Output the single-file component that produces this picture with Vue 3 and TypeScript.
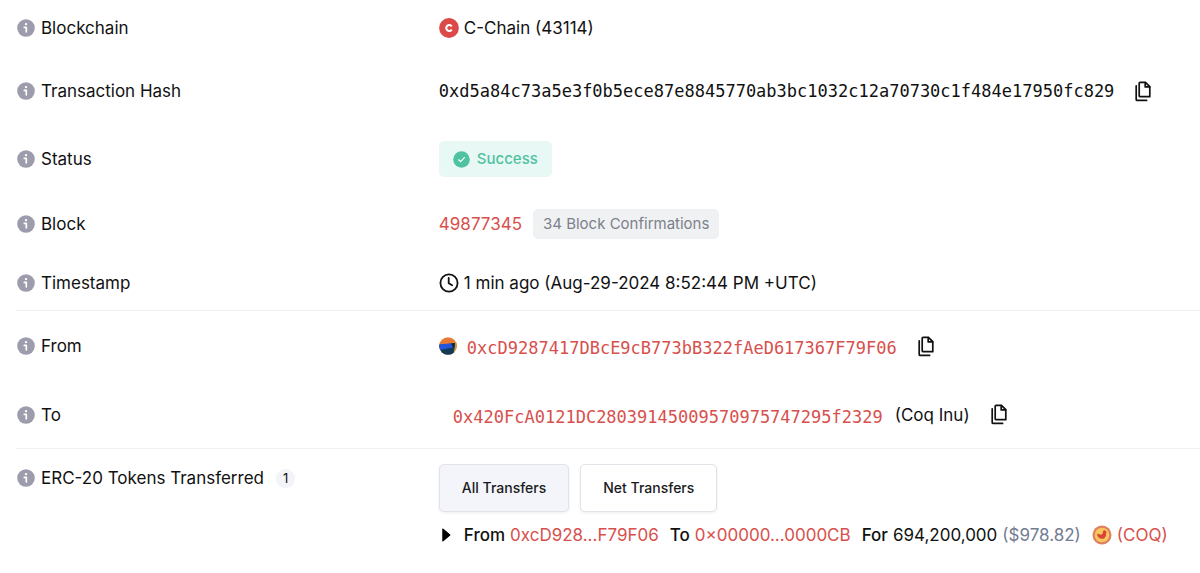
<script setup lang="ts">
import { defineComponent, h, ref } from 'vue'

type Kind = 'chain' | 'hash' | 'status' | 'block' | 'time' | 'from' | 'to'

interface Row {
  kind: Kind
  label: string
}

const overview: Row[] = [
  { kind: 'chain', label: 'Blockchain' },
  { kind: 'hash', label: 'Transaction Hash' },
  { kind: 'status', label: 'Status' },
  { kind: 'block', label: 'Block' },
  { kind: 'time', label: 'Timestamp' },
]
const parties: Row[] = [
  { kind: 'from', label: 'From' },
  { kind: 'to', label: 'To' },
]
const groups: Row[][] = [overview, parties]

const hash = '0xd5a84c73a5e3f0b5ece87e8845770ab3bc1032c12a70730c1f484e17950fc829'
const sender = '0xcD9287417DBcE9cB773bB322fAeD617367F79F06'
const recipient = '0x420FcA0121DC28039145009570975747295f2329'

const view = ref<'all' | 'net'>('all')

function copy(text: string): void {
  void navigator.clipboard?.writeText(text)
}

const InfoIcon = defineComponent({
  render: () =>
    h('svg', { width: 18, height: 18, viewBox: '0 0 18 18', 'aria-hidden': 'true' }, [
      h('circle', { cx: 9, cy: 9, r: 8.8, fill: '#9d9cac' }),
      h('circle', { cx: 9, cy: 5.1, r: 1.2, fill: '#fff' }),
      h('path', { d: 'M7.3 8.4h2v4.4', fill: 'none', stroke: '#fff', 'stroke-width': 1.7, 'stroke-linecap': 'round', 'stroke-linejoin': 'round' }),
    ]),
})

const CopyIcon = defineComponent({
  render: () =>
    h('svg', { width: 16, height: 21, viewBox: '0 0 16 21', fill: 'none', stroke: '#111', 'stroke-width': 1.7, 'stroke-linejoin': 'round', 'stroke-linecap': 'round', 'aria-hidden': 'true' }, [
      h('path', { d: 'M5.2 1.3h5.2l4.400 4.400v10H5.200a1 1 0 0 1-1-1V2.300a1 1 0 0 1 1-1z' }),
      h('path', { d: 'M10.2 1.5v4.4h4.4' }),
      h('path', { d: 'M1.2 4.8v13.6a1 1 0 0 0 1 1h9.4' }),
    ]),
})
</script>

<template>
  <main class="details">
    <dl v-for="(rows, g) in groups" :key="g" class="group">
      <div v-for="row in rows" :key="row.kind" class="row" :class="row.kind">
        <dt class="label"><InfoIcon />{{ row.label }}</dt>

        <dd v-if="row.kind === 'chain'" class="value">
          <svg width="20" height="20" viewBox="0 0 20 20" aria-hidden="true">
            <circle cx="10" cy="10" r="9.9" fill="#db4a48" />
            <path d="M12.7 8.600A2.900 3 0 1 0 12.700 11.400" fill="none" stroke="#fff" stroke-width="2.1" />
          </svg>
          <span>C-Chain (43114)</span>
        </dd>

        <dd v-else-if="row.kind === 'hash'" class="value">
          <span class="mono">{{ hash }}</span>
          <button class="copy" type="button" aria-label="Copy transaction hash" @click="copy(hash)"><CopyIcon /></button>
        </dd>

        <dd v-else-if="row.kind === 'status'" class="value">
          <span class="success">
            <svg width="17" height="17" viewBox="0 0 17 17" aria-hidden="true">
              <circle cx="8.5" cy="8.5" r="8.3" fill="#4fc3a1" />
              <path d="M5.6 8.8l2 1.8 3.8-3.9" fill="none" stroke="#fff" stroke-width="1.2" stroke-linecap="round" stroke-linejoin="round" />
            </svg>
            Success
          </span>
        </dd>

        <dd v-else-if="row.kind === 'block'" class="value">
          <a href="#block">49877345</a>
          <span class="confirmations">34 Block Confirmations</span>
        </dd>

        <dd v-else-if="row.kind === 'time'" class="value">
          <svg width="20" height="20" viewBox="0 0 20 20" fill="none" stroke="#111" stroke-width="1.8" stroke-linecap="round" aria-hidden="true">
            <circle cx="10" cy="10" r="8.6" />
            <path d="M9.7 5v5.2l3.4 2" stroke-linejoin="round" />
          </svg>
          <span>1 min ago (Aug-29-2024 8:52:44 PM +UTC)</span>
        </dd>

        <dd v-else-if="row.kind === 'from'" class="value">
          <svg class="avatar" width="18" height="18" viewBox="0 0 18 18" aria-hidden="true">
            <defs><clipPath id="avatar-clip"><circle cx="9" cy="9" r="8.8" /></clipPath></defs>
            <g clip-path="url(#avatar-clip)">
              <rect width="18" height="18" fill="#e97832" />
              <path d="M13 5.5l5-.8v8l-4 3z" fill="#c99a4b" />
              <path d="M0 8l16-2-1.5 12H0z" fill="#123b55" />
              <path d="M0 7.2l12.3-.8 2 4.1L1 13z" fill="#2355d8" />
              <path d="M12.3 6.4l3.7-.4-.9 6z" fill="#17252d" />
            </g>
          </svg>
          <a class="mono" href="#sender">{{ sender }}</a>
          <button class="copy" type="button" aria-label="Copy sender address" @click="copy(sender)"><CopyIcon /></button>
        </dd>

        <dd v-else class="value">
          <a class="mono" href="#recipient">{{ recipient }}</a>
          <span class="name">(Coq Inu)</span>
          <button class="copy" type="button" aria-label="Copy recipient address" @click="copy(recipient)"><CopyIcon /></button>
        </dd>
      </div>
    </dl>

    <dl class="group">
      <div class="row tokens">
        <dt class="label"><InfoIcon />ERC-20 Tokens Transferred <span class="count">1</span></dt>
        <dd class="transfers">
          <div class="tabs">
            <button type="button" :class="{ active: view === 'all' }" :aria-pressed="view === 'all'" @click="view = 'all'">All Transfers</button>
            <button type="button" :class="{ active: view === 'net' }" :aria-pressed="view === 'net'" @click="view = 'net'">Net Transfers</button>
          </div>
          <div class="transfer">
            <svg class="caret" width="9" height="14" viewBox="0 0 9 14" aria-hidden="true"><path d="M.8 .8L8.200 7 .8 13.200z" fill="#000" stroke="#000" stroke-linejoin="round" /></svg>
            <span class="pair"><b>From</b><a href="#sender">0xcD928...F79F06</a></span>
            <span class="pair"><b>To</b><a href="#pool">0×00000...0000CB</a></span>
            <span class="pair"><b>For</b><span>694,200,000</span><span class="usd">($978.82)</span></span>
            <a class="token" href="#token">
              <svg width="20" height="20" viewBox="0 0 20 20" aria-hidden="true">
                <circle cx="10" cy="10" r="9.5" fill="#de8060" />
                <circle cx="10" cy="10" r="7.3" fill="#f8c65c" />
                <path d="M5 8.800l4.400 1 1.400-1.500.3-2.300 1.500-.9 1.400 1.300.9.9-.9.9c.5 3-1.200 5.600-3.900 5.600-2.800 0-4.700-1.800-5.100-5z" fill="#d9443a" />
              </svg>
              (COQ)
            </a>
          </div>
        </dd>
      </div>
    </dl>
  </main>
</template>

<style>
body {
  margin: 0;
  background: #fff;
}
</style>

<style scoped>
.details {
  padding-left: 16px;
  font-family: Inter, sans-serif;
  font-size: 17px;
  line-height: 24px;
  color: #111;
}

.group {
  margin: 0;
}

.group + .group {
  border-top: 1px solid #f0f0f2;
}

.row {
  display: grid;
  grid-template-columns: minmax(0, 5fr) minmax(0, 9fr);
  align-items: center;
  min-height: 56px;
}

.hash,
.from {
  min-height: 70px;
}

.status {
  min-height: 66px;
}

.block {
  min-height: 64px;
}

.time {
  min-height: 54px;
}

.to {
  min-height: 67px;
}

.label,
.value {
  display: flex;
  align-items: center;
  margin: 0;
  white-space: nowrap;
}

.label {
  gap: 6px;
  padding-left: 1px;
}

.value {
  gap: 5px;
}

svg {
  display: block;
  flex: none;
}

a {
  color: #d8504d;
  text-decoration: none;
}

.mono {
  font-family: "DejaVu Sans Mono", monospace;
  font-size: 17px;
}

.copy {
  display: block;
  margin-left: 16px;
  padding: 0;
  border: 0;
  background: none;
  cursor: pointer;
}

.success {
  display: flex;
  align-items: center;
  gap: 7px;
  padding: 6px 14px;
  border-radius: 5px;
  background: #e8f8f4;
  color: #4fc3a1;
  font-size: 15px;
  font-weight: 500;
}

.confirmations {
  margin-left: 6px;
  padding: 3px 10px;
  border-radius: 5px;
  background: #f0f1f3;
  color: #7b818a;
  font-size: 15px;
}

.from .mono {
  margin-left: 5px;
}

.from .mono,
.to .mono {
  padding-top: 4px;
}

.to .value {
  padding-left: 14px;
}

.name {
  margin-left: 7px;
}

.tokens {
  align-items: start;
  padding: 15px 0;
}

.tokens .label {
  padding-top: 2px;
}

.count {
  margin-left: 6px;
  padding: 0 7px;
  border-radius: 9px;
  background: #f3f4f9;
  font-size: 13px;
  line-height: 19px;
}

.transfers {
  margin: 0;
}

.tabs {
  display: flex;
  gap: 11px;
}

.tabs button {
  padding: 11px 22px;
  border: 1px solid #e2e3e8;
  border-radius: 5px;
  background: #fff;
  box-shadow: 0 1px 3px rgba(20, 24, 40, 0.08);
  color: #1a1b20;
  font: 500 14px/24px Inter, sans-serif;
  cursor: pointer;
}

.tabs .active {
  background: #f4f5fa;
}

.transfer {
  display: flex;
  align-items: center;
  gap: 11px;
  margin-top: 11px;
  padding-left: 3px;
  white-space: nowrap;
}

.pair,
.token {
  display: flex;
  align-items: center;
  gap: 5px;
}

.caret {
  margin-right: 2px;
}

b {
  font-weight: 500;
}

.usd {
  color: #727c92;
}
</style>
